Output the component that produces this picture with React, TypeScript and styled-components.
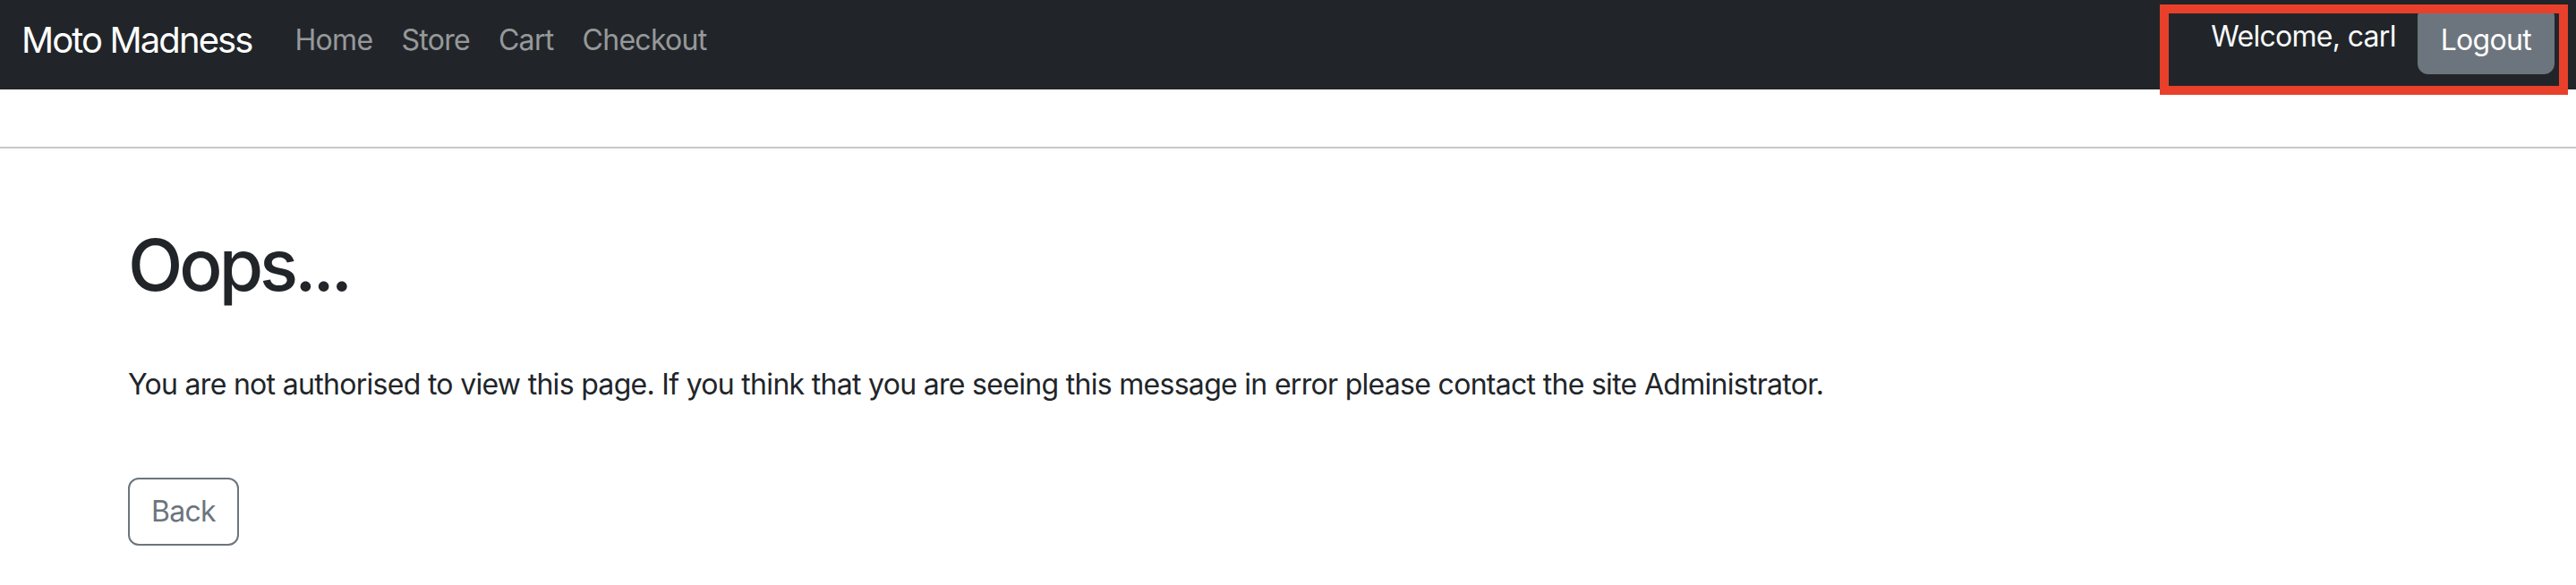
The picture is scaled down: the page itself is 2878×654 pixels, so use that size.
import React from "react";
import styled, { createGlobalStyle } from "styled-components";

const GlobalStyle = createGlobalStyle`
  html, body {
    margin: 0;
    padding: 0;
    background: #ffffff;
  }
  body {
    font-family: Inter, "Noto Sans", "Liberation Sans", sans-serif;
    color: #212529;
    font-size: 32px;
    line-height: 1.5;
    letter-spacing: -0.7px;
  }
  * {
    box-sizing: border-box;
  }
`;

const Page = styled.div`
  position: relative;
  width: 2878px;
  min-height: 654px;
`;

const NavBar = styled.nav`
  height: 100px;
  background: #212529;
  display: flex;
  align-items: center;
  justify-content: space-between;
  padding: 7px 24px 17px;
`;

const NavLeft = styled.div`
  display: flex;
  align-items: center;
`;

const Brand = styled.a`
  color: #ffffff;
  font-size: 40px;
  line-height: 1.5;
  letter-spacing: -1.9px;
  margin-right: 32px;
  text-decoration: none;
`;

const NavList = styled.ul`
  display: flex;
  list-style: none;
  margin: 0;
  padding: 0;
`;

const NavLink = styled.a`
  display: block;
  padding: 0 16px;
  color: rgba(255, 255, 255, 0.55);
  font-size: 32px;
  line-height: 1.5;
  text-decoration: none;
`;

const NavRight = styled.div`
  display: flex;
  align-items: center;
`;

const Welcome = styled.span`
  color: #f8f9fa;
  margin-right: 24px;
  margin-bottom: 8px;
`;

const Button = styled.button<{ $variant: "solid" | "outline" }>`
  font-family: inherit;
  font-size: 32px;
  line-height: 48px;
  letter-spacing: -0.7px;
  padding: 12px 24px;
  border-radius: 12px;
  border: 2px solid #6c757d;
  background: ${(p) => (p.$variant === "solid" ? "#6c757d" : "transparent")};
  color: ${(p) => (p.$variant === "solid" ? "#ffffff" : "#6c757d")};
  cursor: pointer;
`;

const Rule = styled.hr`
  margin: 64px 0 0;
  border: 0;
  border-top: 2px solid #212529;
  opacity: 0.25;
`;

const Container = styled.main`
  max-width: 2640px;
  margin: 0 auto;
  padding: 82px 24px 0;
`;

const Title = styled.h1`
  margin: 0 0 62px;
  font-size: 80px;
  line-height: 1.2;
  font-weight: 500;
  letter-spacing: -4px;
`;

const Message = styled.p`
  margin: 0 0 80px;
`;

const Annotation = styled.div`
  position: absolute;
  top: 5px;
  right: 9px;
  width: 456px;
  height: 101px;
  border: 10px solid #e8402b;
  pointer-events: none;
`;

const links = ["Home", "Store", "Cart", "Checkout"];

const App: React.FC = () => {
  return (
    <>
      <GlobalStyle />
      <Page>
        <NavBar>
          <NavLeft>
            <Brand href="#">Moto Madness</Brand>
            <NavList>
              {links.map((l) => (
                <li key={l}>
                  <NavLink href="#">{l}</NavLink>
                </li>
              ))}
            </NavList>
          </NavLeft>
          <NavRight>
            <Welcome>Welcome, carl</Welcome>
            <Button $variant="solid">Logout</Button>
          </NavRight>
        </NavBar>
        <Rule />
        <Container>
          <Title>Oops...</Title>
          <Message>
            You are not authorised to view this page. If you think that you are
            seeing this message in error please contact the site Administrator.
          </Message>
          <Button $variant="outline">Back</Button>
        </Container>
        <Annotation />
      </Page>
    </>
  );
};

export default App;
